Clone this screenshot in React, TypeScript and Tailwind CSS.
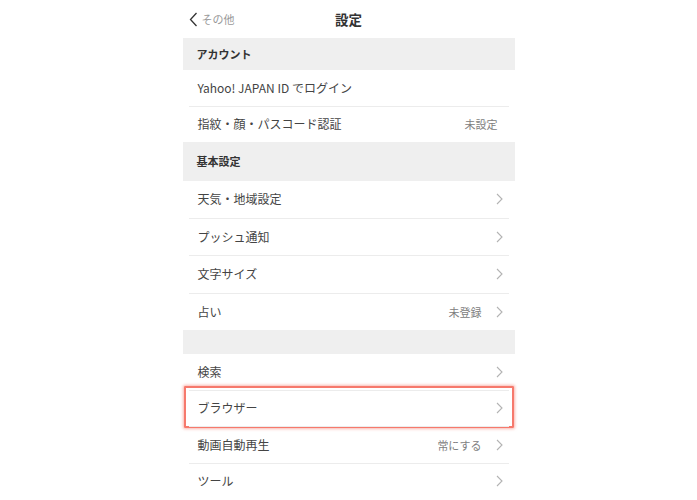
const font = { fontFamily: '"Noto Sans CJK JP", "Noto Sans", sans-serif' };

type Row = { label: string; value?: string; chevron?: boolean; highlight?: boolean };

function Chevron() {
  return (
    <svg width="7" height="12" viewBox="0 0 7 12" className="shrink-0">
      <polyline points="1,1 6,6 1,11" fill="none" stroke="#b3b3b3" strokeWidth="1.1" />
    </svg>
  );
}

function SectionHeader({ title, h }: { title?: string; h: string }) {
  return (
    <div className={`flex items-center bg-[#efefef] px-[14px] text-[11px] font-semibold text-[#333] ${h}`}>
      {title}
    </div>
  );
}

function Rows({ rows, h }: { rows: Row[]; h: string }) {
  return (
    <ul>
      {rows.map((row, i) => (
        <li key={row.label} className="relative">
          {i > 0 && <div className="mx-[6px] h-px bg-[#ececec]" />}
          <div className={`flex items-center px-[15px] text-[12px] text-[#444] ${h}`}>
            <span className="flex-1">{row.label}</span>
            {row.value && (
              <span className={`text-[11px] text-[#808080] ${row.chevron ? "mr-[14px]" : "mr-[2px]"}`}>
                {row.value}
              </span>
            )}
            {row.chevron && <span className="mr-[-3px]"><Chevron /></span>}
          </div>
          {row.highlight && (
            <div className="pointer-events-none absolute left-px right-px top-[-4px] bottom-[-2px] rounded-[1px] border-2 border-[#f6796c] shadow-[0_0_3px_1px_rgba(246,121,108,0.55)]" />
          )}
        </li>
      ))}
    </ul>
  );
}

export default function App() {
  return (
    <div className="h-[500px] w-[697px] overflow-hidden bg-white" style={font}>
      <div className="mx-auto w-[332px]">
        {/* Nav bar */}
        <div className="relative flex h-[38px] items-center">
          <div className="flex items-center gap-[4px] pl-[6px]">
            <svg width="9" height="15" viewBox="0 0 9 15">
              <polyline points="7.5,1 1.5,7.5 7.5,14" fill="none" stroke="#333" strokeWidth="1.3" />
            </svg>
            <span className="text-[11px] text-[#999]">その他</span>
          </div>
          <span className="absolute left-1/2 top-[9px] -translate-x-1/2 text-[13.5px] font-semibold text-[#333]">設定</span>
        </div>

        <SectionHeader title="アカウント" h="h-[32px]" />
        <Rows
          h="h-[35.5px]"
          rows={[
            { label: "Yahoo! JAPAN ID でログイン" },
            { label: "指紋・顔・パスコード認証", value: "未設定" },
          ]}
        />

        <SectionHeader title="基本設定" h="h-[39px]" />
        <Rows
          h="h-[36.5px]"
          rows={[
            { label: "天気・地域設定", chevron: true },
            { label: "プッシュ通知", chevron: true },
            { label: "文字サイズ", chevron: true },
            { label: "占い", value: "未登録", chevron: true },
          ]}
        />

        <SectionHeader h="h-[24px]" />
        <Rows
          h="h-[35.5px]"
          rows={[
            { label: "検索", chevron: true },
            { label: "ブラウザー", chevron: true, highlight: true },
            { label: "動画自動再生", value: "常にする", chevron: true },
            { label: "ツール", chevron: true },
          ]}
        />
      </div>
    </div>
  );
}
